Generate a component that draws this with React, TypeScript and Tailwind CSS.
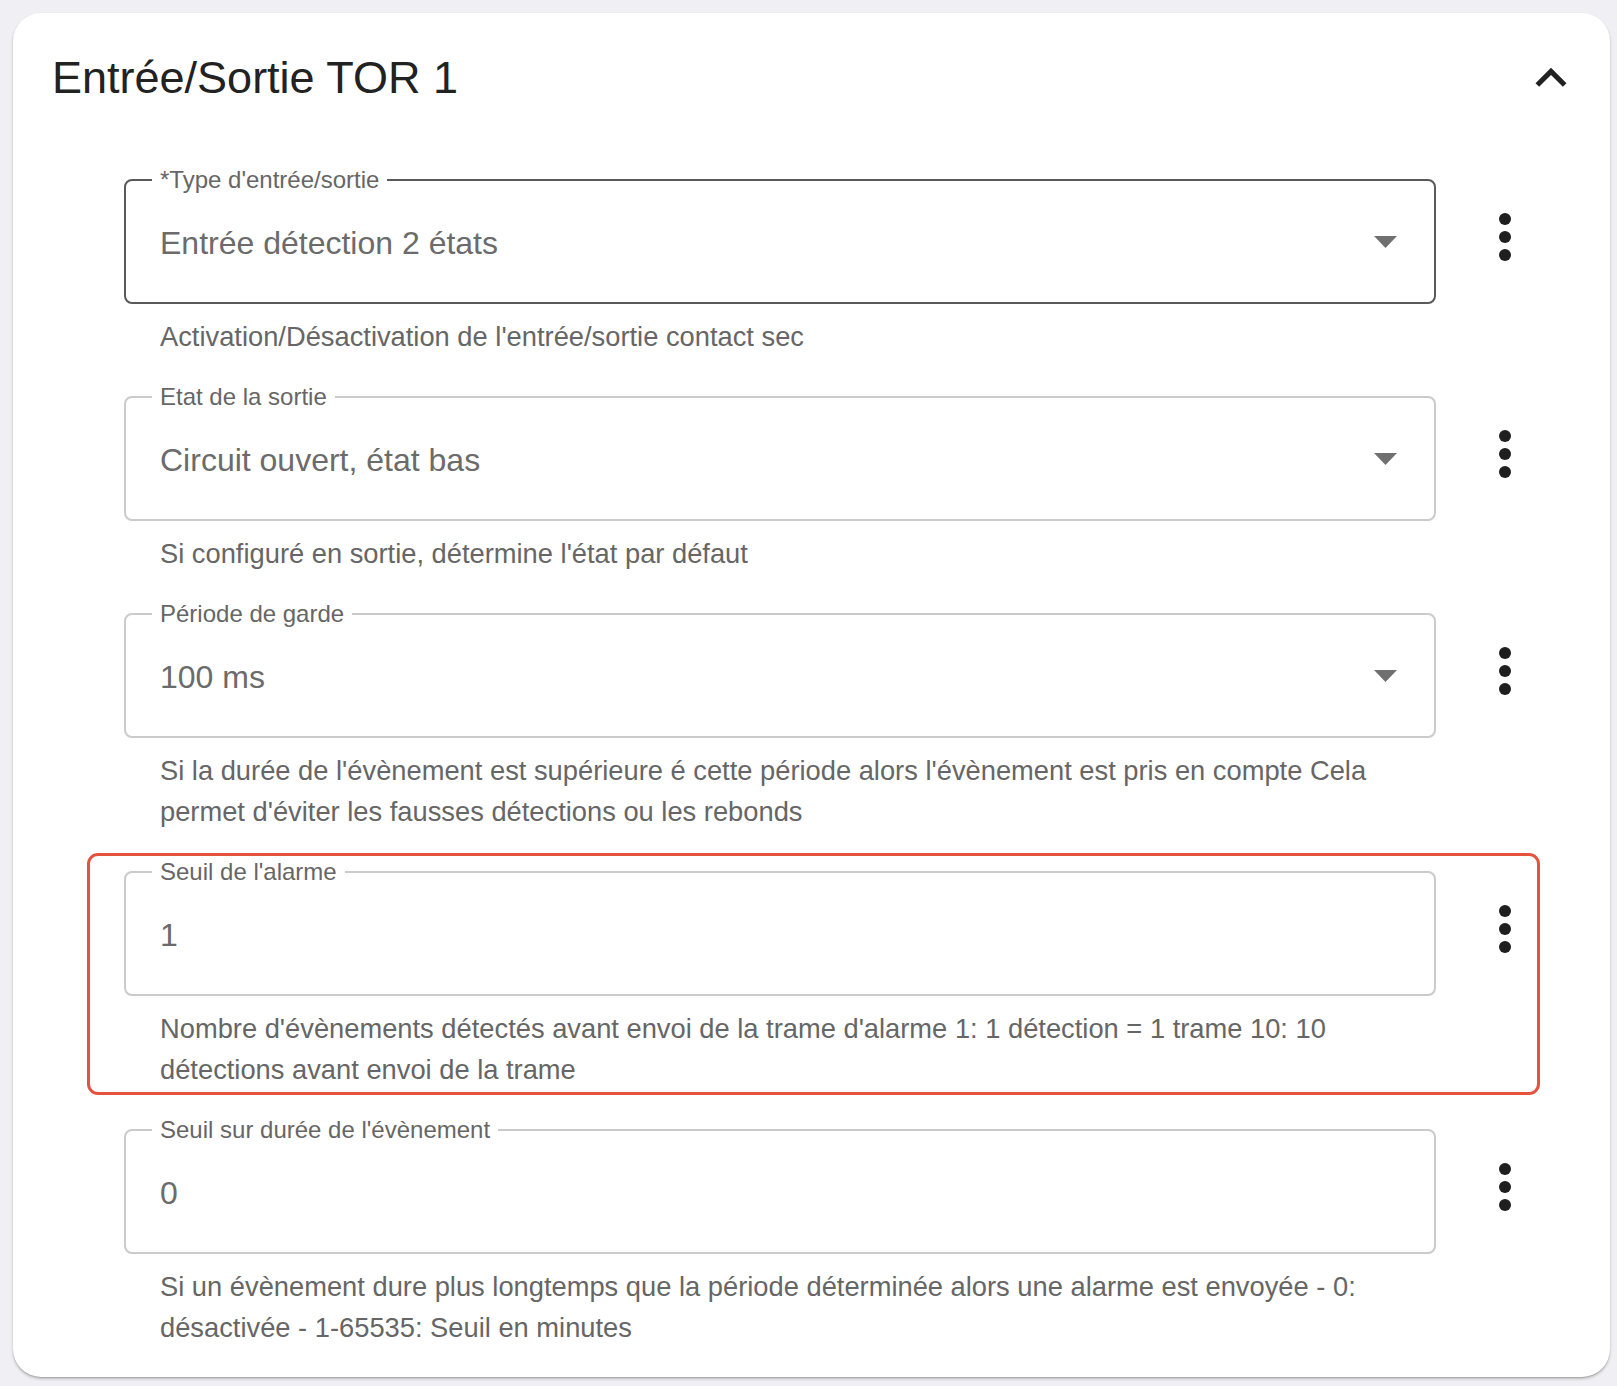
import type { ReactNode } from 'react';

type Field = {
  label: string;
  value: string;
  helper: ReactNode;
  select?: boolean;
  active?: boolean;
  highlight?: boolean;
};

const FIELDS: Field[] = [
  {
    label: "*Type d'entrée/sortie",
    value: 'Entrée détection 2 états',
    helper: "Activation/Désactivation de l'entrée/sortie contact sec",
    select: true,
    active: true,
  },
  {
    label: 'Etat de la sortie',
    value: 'Circuit ouvert, état bas',
    helper: "Si configuré en sortie, détermine l'état par défaut",
    select: true,
  },
  {
    label: 'Période de garde',
    value: '100 ms',
    helper:
      "Si la durée de l'évènement est supérieure é cette période alors l'évènement est pris en compte Cela permet d'éviter les fausses détections ou les rebonds",
    select: true,
  },
  {
    label: "Seuil de l'alarme",
    value: '1',
    helper:
      "Nombre d'évènements détectés avant envoi de la trame d'alarme 1: 1 détection = 1 trame 10: 10 détections avant envoi de la trame",
    highlight: true,
  },
  {
    label: "Seuil sur durée de l'évènement",
    value: '0',
    helper:
      'Si un évènement dure plus longtemps que la période déterminée alors une alarme est envoyée - 0: désactivée - 1-65535: Seuil en minutes',
  },
];

function ExpandLessIcon() {
  return (
    <svg viewBox="0 0 24 24" width="62" height="62" aria-hidden="true" className="-mt-[1px] shrink-0 text-[#222]">
      <path fill="currentColor" d="M12 8l-6 6 1.41 1.41L12 10.83l4.59 4.58L18 14z" />
    </svg>
  );
}

function MoreVertIcon() {
  return (
    <svg viewBox="0 0 24 24" width="72" height="72" aria-hidden="true" className="text-[#1f1f1f]">
      <circle cx="12" cy="6" r="2" fill="currentColor" />
      <circle cx="12" cy="12" r="2" fill="currentColor" />
      <circle cx="12" cy="18" r="2" fill="currentColor" />
    </svg>
  );
}

function DropArrow() {
  return (
    <svg viewBox="0 0 23 12" width="23" height="12" aria-hidden="true" className="shrink-0 text-[#707070]">
      <polygon points="0,0 23,0 11.5,12" fill="currentColor" />
    </svg>
  );
}

function FieldRow({ field }: { field: Field }) {
  return (
    <div className="relative flex items-start gap-[33px]">
      {field.highlight && (
        <div className="pointer-events-none absolute -top-[18px] -bottom-[5px] -left-[37px] right-[42px] rounded-[11px] border-[3px] border-[#e5533f]" />
      )}
      <div className="w-[1312px] shrink-0">
        <div
          className={
            field.active
              ? 'relative flex h-[125px] items-center justify-between rounded-[8px] border-2 border-[#595959] pr-[37px] pl-[34px]'
              : 'relative flex h-[125px] items-center justify-between rounded-[8px] border-2 border-[#cbcbcb] pr-[37px] pl-[34px]'
          }
        >
          <span className="absolute -top-[13px] left-[26px] bg-white px-[8px] text-[24px] leading-[24px] text-[#666]">
            {field.label}
          </span>
          <span className="pt-[3px] text-[32px] leading-[32px] text-[#6b6b6b]">{field.value}</span>
          {field.select && <DropArrow />}
        </div>
        <p className="mt-[12px] pr-[36px] pl-[36px] text-[27.3px] leading-[41px] text-[#666]">{field.helper}</p>
      </div>
      <button type="button" className="mt-[21.5px] flex h-[72px] w-[72px] shrink-0 items-center justify-center">
        <MoreVertIcon />
      </button>
    </div>
  );
}

export default function App() {
  return (
    <div className="min-h-[1386px] bg-[#f0f0f4] pt-[13px] pr-[7px] pl-[13px] font-['Liberation_Sans',Arial,sans-serif]">
      <div className="rounded-[28px] bg-white pt-[35px] pr-[28px] pb-[29px] pl-[39px] shadow-[0_2px_3px_rgba(0,0,0,0.22),0_1px_1px_rgba(0,0,0,0.12)]">
        <div className="flex h-[56px] items-start justify-between">
          <h2 className="mt-[2px] text-[45px] leading-[56px] font-normal text-[#222]">Entrée/Sortie TOR 1</h2>
          <ExpandLessIcon />
        </div>
        <div className="mt-[75px] ml-[72px] flex flex-col gap-[39px]">
          {FIELDS.map((field) => (
            <FieldRow key={field.label} field={field} />
          ))}
        </div>
      </div>
    </div>
  );
}
